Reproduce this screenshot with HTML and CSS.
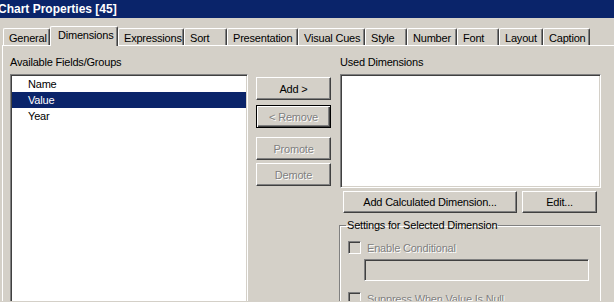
FILE: index.html
```html
<!DOCTYPE html>
<html lang="en">
<head>
    <meta charset="UTF-8">
    <title>Chart Properties [45]</title>
    <link rel="stylesheet" href="styles.css">
</head>
<body>
    <div class="titlebar">Chart Properties [45]</div>

    <!-- Tab strip -->
    <div class="tabs">
        <div class="tab" style="width: 47px;">General</div>
        <div class="tab selected" style="width: 68px;">Dimensions</div>
        <div class="tab" style="width: 66px;">Expressions</div>
        <div class="tab" style="width: 43px;">Sort</div>
        <div class="tab" style="width: 71px;">Presentation</div>
        <div class="tab" style="width: 67px;">Visual Cues</div>
        <div class="tab" style="width: 42px;">Style</div>
        <div class="tab" style="width: 50px;">Number</div>
        <div class="tab" style="width: 42px;">Font</div>
        <div class="tab" style="width: 44px;">Layout</div>
        <div class="tab" style="width: 47px;">Caption</div>
    </div>

    <div class="panel">
        <!-- Available fields -->
        <div class="col-fields">
            <div class="label">Available Fields/Groups</div>
            <div class="listbox fields">
                <div class="item">Name</div>
                <div class="item active">Value</div>
                <div class="item">Year</div>
            </div>
        </div>

        <!-- Move buttons -->
        <div class="col-buttons">
            <button class="btn">Add &gt;</button>
            <button class="btn default" disabled>&lt; Remove</button>
            <button class="btn promote" disabled>Promote</button>
            <button class="btn demote" disabled>Demote</button>
        </div>

        <!-- Used dimensions -->
        <div class="col-used">
            <div class="label used-label">Used Dimensions</div>
            <div class="listbox used"></div>
            <div class="used-actions">
                <button class="btn calc">Add Calculated Dimension...</button>
                <button class="btn edit">Edit...</button>
            </div>
            <fieldset class="group">
                <legend>Settings for Selected Dimension</legend>
                <label class="check-row first">
                    <input type="checkbox" disabled>
                    <span class="disabled-text">Enable Conditional</span>
                </label>
                <input type="text" class="cond-input" disabled>
                <label class="check-row second">
                    <input type="checkbox" disabled>
                    <span class="disabled-text">Suppress When Value Is Null</span>
                </label>
            </fieldset>
        </div>
    </div>
</body>
</html>
```
FILE: styles.css
```css
html, body {
    margin: 0;
    padding: 0;
    height: 302px;
    overflow: hidden;
}
body {
    font-family: "Liberation Sans", Arial, sans-serif;
    font-size: 11px;
    letter-spacing: -0.2px;
    color: #000;
    background-color: #d4d0c8;
}
.titlebar {
    height: 18px;
    line-height: 18px;
    background-color: #0a246a;
    color: #fff;
    font-weight: bold;
    font-size: 12px;
    letter-spacing: 0;
    text-indent: -2px;
    white-space: nowrap;
}
.tabs {
    height: 27px;
    display: flex;
    align-items: flex-end;
    padding-left: 3px;
}
.tab {
    box-sizing: border-box;
    height: 17px;
    padding: 3px 0 0 5px;
    line-height: 13px;
    white-space: nowrap;
    overflow: hidden;
    border-top: 1px solid #fff;
    border-left: 1px solid #fff;
    border-right: 1px solid #404040;
    border-radius: 2px 2px 0 0;
    box-shadow: inset -1px 0 #808080;
}
.tab.selected {
    height: 20px;
    padding: 2px 0 0 7px;
    margin-bottom: -1px;
    background-color: #d4d0c8;
    position: relative;
    z-index: 1;
}
.panel {
    margin-left: 2px;
    border-top: 1px solid #fff;
    border-left: 1px solid #fff;
    padding: 10px 0 0 7px;
    display: flex;
    align-items: flex-start;
    height: 245px;
    overflow: hidden;
}
.label {
    line-height: 13px;
    white-space: nowrap;
}
.listbox {
    box-sizing: border-box;
    background-color: #fff;
    border: 1px solid;
    border-color: #808080 #fff #fff #808080;
    box-shadow: inset 1px 1px #404040, inset -1px -1px #d4d0c8;
    padding: 1px;
    margin-top: 5px;
}
.col-fields {
    width: 238px;
}
.listbox.fields {
    height: 240px;
}
.item {
    height: 16px;
    line-height: 16px;
    padding-left: 16px;
}
.item.active {
    background-color: #0a246a;
    color: #fff;
}
.btn {
    box-sizing: border-box;
    display: block;
    height: 23px;
    padding: 0;
    font-family: inherit;
    font-size: 11px;
    letter-spacing: -0.2px;
    color: #000;
    background-color: #d4d0c8;
    border: 1px solid;
    border-color: #fff #404040 #404040 #fff;
    box-shadow: inset -1px -1px #808080, inset 1px 1px #d4d0c8;
    border-radius: 0;
}
.btn:disabled {
    color: #808080;
    text-shadow: 1px 1px 0 #fff;
}
.col-buttons {
    width: 75px;
    margin-left: 8px;
    padding-top: 21px;
}
.col-buttons .btn {
    width: 75px;
}
.btn.default {
    margin-top: 5px;
    border: 1px solid #000;
    box-shadow: inset 1px 1px #fff, inset -1px -1px #404040, inset -2px -2px #808080;
}
.btn.promote {
    margin-top: 9px;
}
.btn.demote {
    margin-top: 3px;
}
.col-used {
    width: 262px;
    margin-left: 8px;
}
.used-label {
    padding-left: 1px;
}
.listbox.used {
    margin-left: 1px;
    width: 261px;
    height: 114px;
}
.used-actions {
    display: flex;
    gap: 5px;
    margin-top: 3px;
    padding-left: 4px;
}
.used-actions .btn {
    height: 22px;
}
.btn.calc {
    width: 174px;
}
.btn.edit {
    width: 75px;
}
.group {
    box-sizing: border-box;
    width: 262px;
    height: 120px;
    margin: 6px 0 0 0;
    padding: 0 0 0 6px;
    border: 1px solid #808080;
    border-right-color: #fff;
    border-bottom-color: #fff;
    box-shadow: inset 1px 1px #fff;
    min-width: 0;
}
.group legend {
    padding: 0 1px;
    line-height: 13px;
}
.check-row {
    display: flex;
    align-items: center;
    height: 13px;
    margin-left: 2px;
}
.check-row.first {
    margin-top: 9px;
}
.check-row.second {
    margin-top: 11px;
}
.check-row input {
    appearance: none;
    -webkit-appearance: none;
    box-sizing: border-box;
    width: 13px;
    height: 13px;
    margin: 0 6px 0 0;
    background-color: #d4d0c8;
    border: 1px solid;
    border-color: #808080 #fff #fff #808080;
    box-shadow: inset 1px 1px #404040, inset -1px -1px #d4d0c8;
}
.disabled-text {
    color: #808080;
    text-shadow: 1px 1px 0 #fff;
    white-space: nowrap;
}
.cond-input {
    display: block;
    box-sizing: border-box;
    width: 225px;
    height: 22px;
    margin: 5px 0 0 18px;
    background-color: #d4d0c8;
    border: 1px solid;
    border-color: #808080 #fff #fff #808080;
    box-shadow: inset 1px 1px #404040, inset -1px -1px #d4d0c8;
}
```
